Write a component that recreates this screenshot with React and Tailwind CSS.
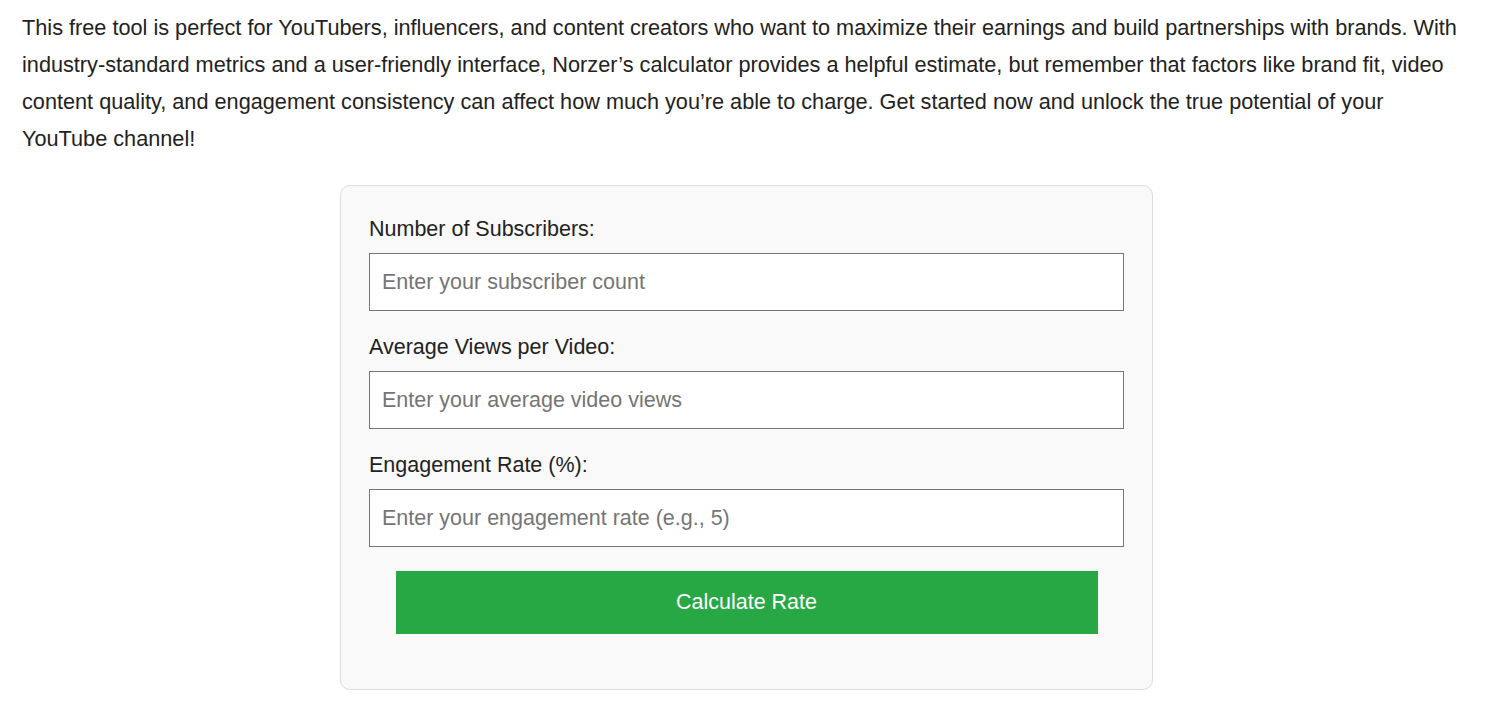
import React from 'react';

const FIELDS = [
    { label: 'Number of Subscribers:', placeholder: 'Enter your subscriber count' },
    { label: 'Average Views per Video:', placeholder: 'Enter your average video views' },
    { label: 'Engagement Rate (%):', placeholder: 'Enter your engagement rate (e.g., 5)' },
];

const App = () => {
    return (
        <div className="min-h-screen bg-white text-[#222] font-['Liberation_Sans',Arial,sans-serif]">
            <p className="ml-[22px] w-[1442px] pt-[9px] text-[21.7px] leading-[37px]">
                This free tool is perfect for YouTubers, influencers, and content creators who want to maximize their earnings and build partnerships with brands. With industry-standard metrics and a user-friendly interface, Norzer’s calculator provides a helpful estimate, but remember that factors like brand fit, video content quality, and engagement consistency can affect how much you’re able to charge. Get started now and unlock the true potential of your YouTube channel!
            </p>

            <div className="ml-[340px] mt-[28px] w-[813px] bg-[#f9f9f9] border border-[#dcdcdc] rounded-[10px] px-[28px] pt-[31px] pb-[55px]">
                {FIELDS.map((f) => (
                    <div key={f.label} className="mb-[24px] last:mb-0">
                        <label className="block text-[21.5px] leading-[24px] mb-[12px] text-[#222]">{f.label}</label>
                        <input
                            type="text"
                            placeholder={f.placeholder}
                            className="block w-full h-[58px] bg-white border border-[#767676] px-[12px] text-[21.5px] outline-none placeholder:text-[#757575]"
                        />
                    </div>
                ))}
                <button
                    type="button"
                    className="block mx-auto mt-[21px] w-[702px] h-[63px] bg-[#28a745] text-white text-[21.5px]"
                >
                    Calculate Rate
                </button>
            </div>
        </div>
    );
};

export default App;
